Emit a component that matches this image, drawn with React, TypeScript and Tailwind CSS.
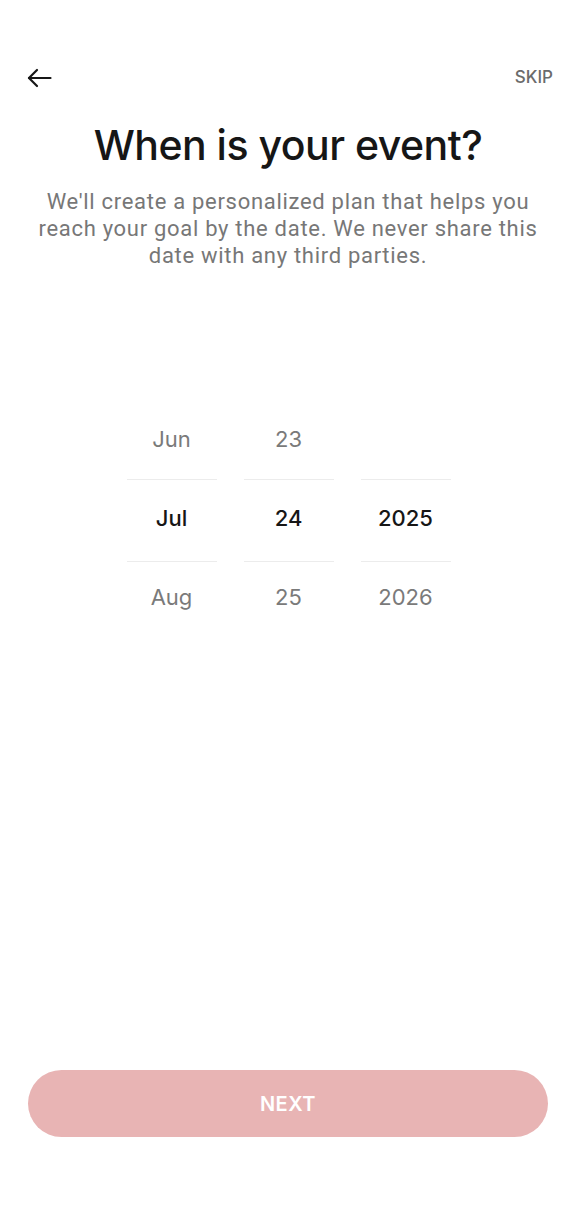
const months = ["Jun", "Jul", "Aug"];
const days = ["23", "24", "25"];
const years = ["", "2025", "2026"];

const PickerColumn = ({ items }: { items: string[] }) => {
  return (
    <div className="w-[90px] flex flex-col items-stretch">
      <div className="h-[80px] flex items-center justify-center text-[22px] text-[#7a7a7a]">{items[0]}</div>
      <div className="h-[83px] border-y border-[#ececec] flex items-center justify-center pb-[4px] text-[22px] font-medium text-[#161616]">
        {items[1]}
      </div>
      <div className="h-[70px] flex items-center justify-center text-[22px] text-[#7a7a7a]">{items[2]}</div>
    </div>
  );
};

export default function App() {
  return (
    <div className="min-h-[1216px] w-[576px] bg-white flex flex-col font-['Inter',sans-serif]">
      <div className="pt-[60px] px-[27px] h-[96px] flex items-start justify-between">
        <button className="h-[36px] flex items-center">
          <svg width="25" height="20" viewBox="0 0 25 20" fill="none" stroke="#161616" strokeWidth="2.2" strokeLinecap="round" strokeLinejoin="round">
            <path d="M23.5 10H2" />
            <path d="M10 2L2 10l8 8" />
          </svg>
        </button>
        <button className="h-[36px] flex items-center -mr-[4px] text-[17px] font-medium text-[#6b6b6b]">SKIP</button>
      </div>
      <h1 className="mt-[26px] text-center text-[41px] leading-[46px] font-medium tracking-[-0.5px] text-[#161616]">
        When is your event?
      </h1>
      <p className="mt-[20px] px-[28px] text-center text-[22px] leading-[27px] text-[#777777] font-['Roboto',sans-serif] tracking-[0.7px]">
        We'll create a personalized plan that helps you reach your goal by the date. We never share this date with any third parties.
      </p>
      <div className="mt-[130px] flex justify-center gap-[27px] pl-[1px]">
        <PickerColumn items={months} />
        <PickerColumn items={days} />
        <PickerColumn items={years} />
      </div>
      <div className="mt-auto px-[28px] pb-[79px]">
        <button className="w-full h-[67px] rounded-full bg-[#e8b4b4] text-white text-[20px] font-semibold tracking-[0.5px]">
          NEXT
        </button>
      </div>
    </div>
  );
}
